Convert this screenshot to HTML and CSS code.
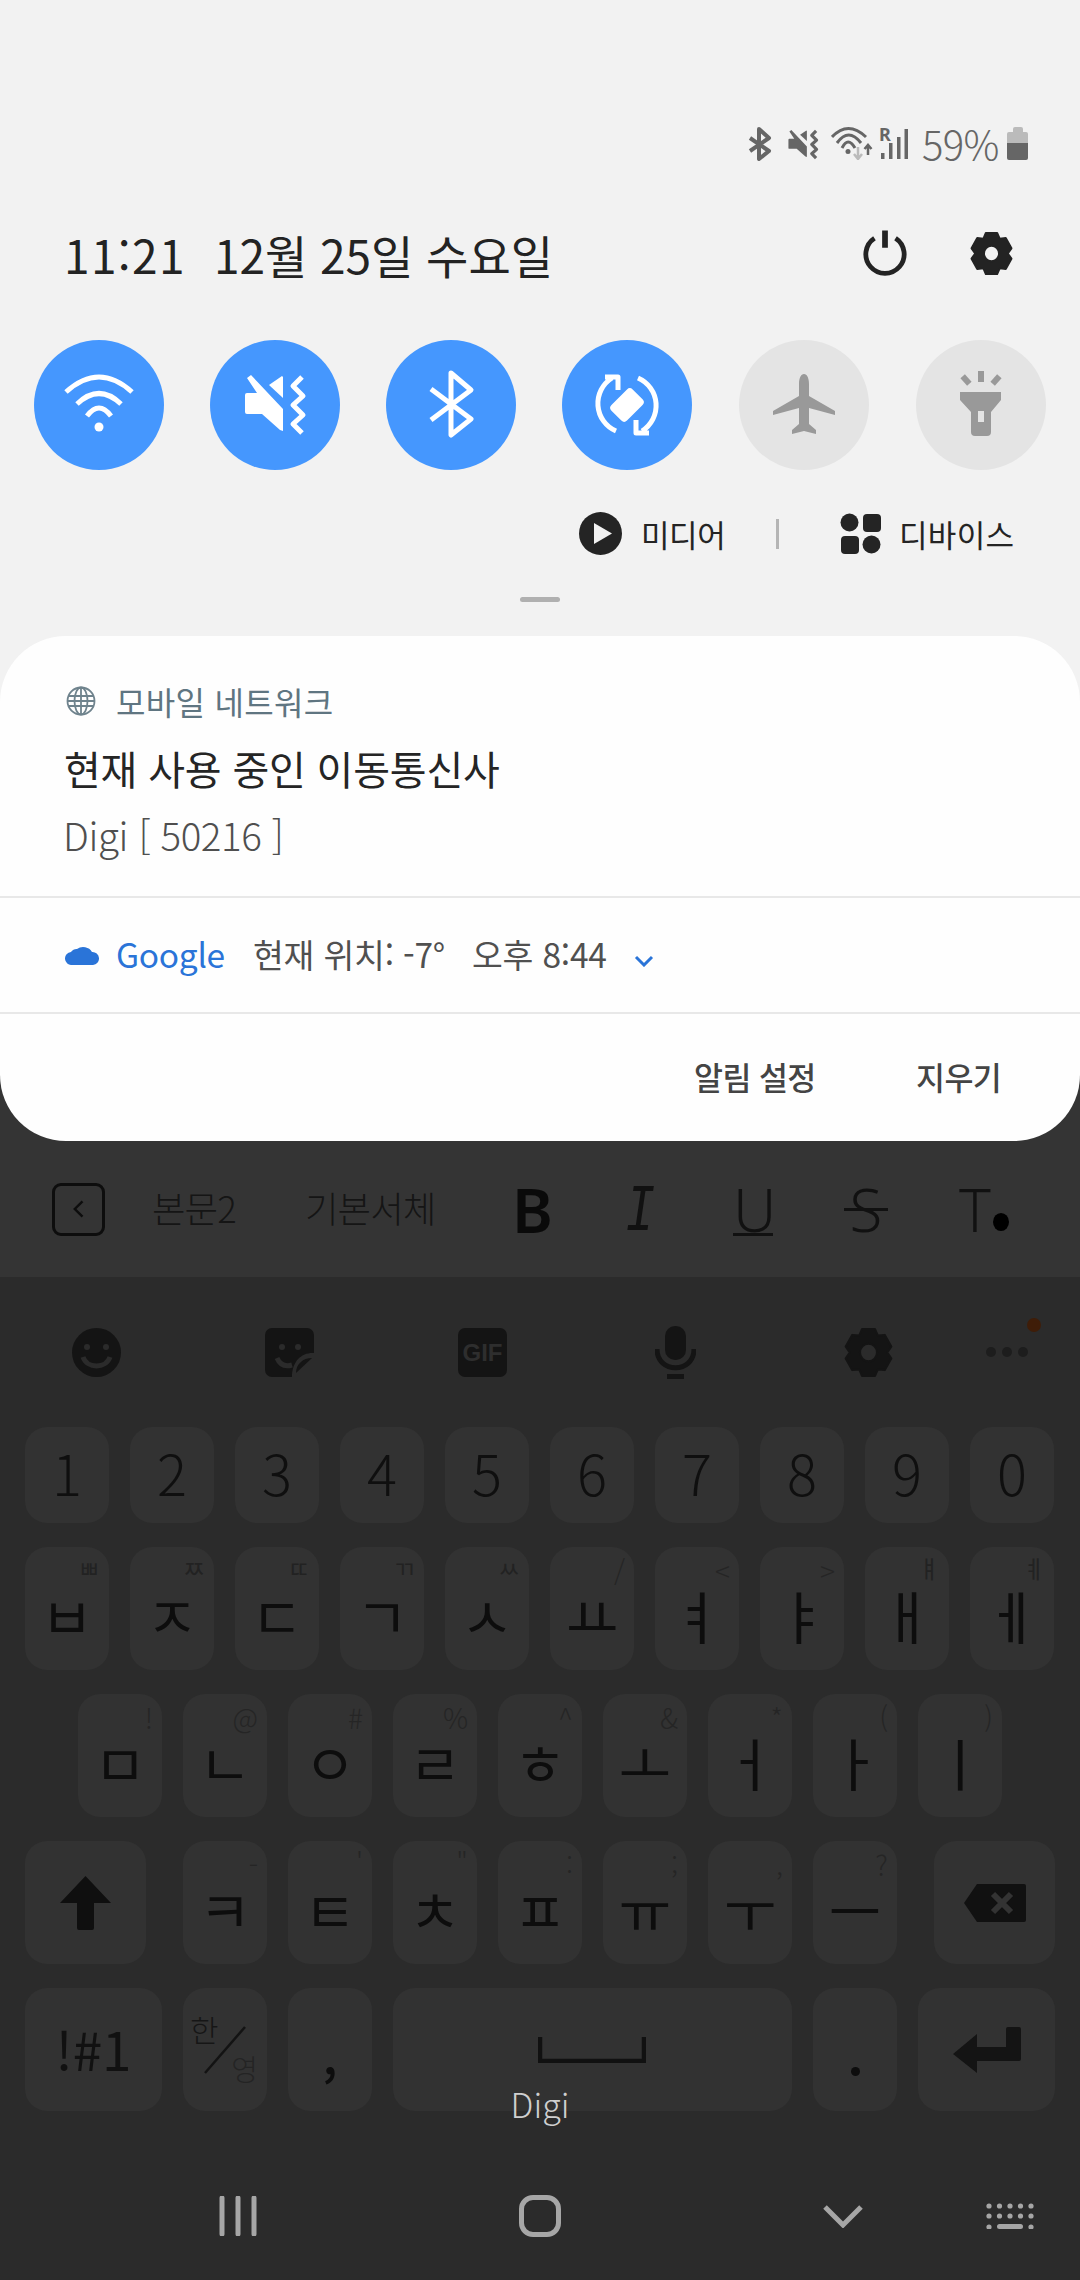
FILE: index.html
```html
<!DOCTYPE html>
<html lang="ko">
<head>
<meta charset="utf-8">
<title>빠른 설정</title>
<link rel="stylesheet" href="styles.css">
</head>
<body>
<svg class="defs" width="0" height="0" aria-hidden="true">
  <symbol id="gear" viewBox="1 1 46 46" preserveAspectRatio="none">
    <path fill-rule="evenodd" stroke="currentColor" stroke-width="2" stroke-linejoin="round" fill="currentColor" d="M17.9 2.9 30.1 2.9 32.8 8.8 39.3 8.2 45.4 18.7 41.5 24 45.4 29.3 39.3 39.8 32.8 39.2 30.1 45.1 17.9 45.1 15.3 39.2 8.7 39.8 2.6 29.3 6.5 24 2.6 18.7 8.7 8.2 15.3 8.8ZM24 16A8 8 0 1 0 24 32 8 8 0 1 0 24 16Z"/>
  </symbol>
  <symbol id="mute" viewBox="30 32 68 64">
    <path fill="currentColor" stroke="none" d="M37 38 41 35 73 69V91L70 90 52 74H37Q35 74 35 72V55Q35 53 37 53H47Z"/>
    <path fill="currentColor" stroke="none" d="M59 45 72 36 73 37V58Z"/>
    <path fill="none" stroke="currentColor" stroke-linejoin="round" d="M92 37 83 46 93 56 83 65 93 75 83 84 92 93"/>
  </symbol>
</svg>

<div class="phone">
  <section class="panel">
    <div class="status">
      <svg class="st-bt" viewBox="0 0 24 34"><path d="M2 11 21 24 11 32V2L21 11 2 24"/></svg>
      <svg class="st-mute"><use href="#mute"/></svg>
      <svg class="st-wifi" viewBox="0 0 42 33">
        <path d="M1 10Q17-7 35 10M6 16Q17.5 0 30 16M11 21Q17 9 24 21"/>
        <circle cx="17" cy="24.500" r="2.500"/>
        <path class="faint" d="M27 20V31M23 27 27 32 31 27"/>
        <path class="thin" d="M37 28V19M33.500 22 37 18 40.500 22"/>
      </svg>
      <svg class="st-signal" viewBox="0 0 30 33">
        <text x="1" y="14" class="roam">R</text>
        <rect x="3" y="26" width="3.500" height="6"/>
        <rect x="11" y="16" width="3.500" height="16"/>
        <rect x="19" y="10" width="3.500" height="22"/>
        <rect x="26.500" y="2" width="3.500" height="30"/>
      </svg>
      <span class="st-level">59%</span>
      <span class="battery"><i class="cap"></i><i class="empty"></i><i class="charge"></i></span>
    </div>

    <div class="clock-row">
      <span class="time">11:21</span>
      <span class="date">12월 25일 수요일</span>
      <svg class="power" viewBox="0 0 48 48"><path d="M13 8A20 20 0 1 0 35 8"/><path class="bar" d="M24 0V18"/></svg>
      <svg class="settings"><use href="#gear"/></svg>
    </div>

    <div class="tiles">
      <span class="tile on">
        <svg viewBox="0 0 130 130"><path d="M32 52Q65 22 98 52M43 64Q65 43 87 64M53 76Q65 60 77 76"/><circle class="solid" cx="65" cy="87" r="4.500"/></svg>
      </span>
      <span class="tile on">
        <svg class="tile-mute" viewBox="0 0 130 130"><use href="#mute" x="30" y="32" width="68" height="64"/></svg>
      </span>
      <span class="tile on">
        <svg viewBox="0 0 130 130"><path d="M45 49 85 79 65 95V33L85 50 45 80"/></svg>
      </span>
      <span class="tile on">
        <svg viewBox="0 0 130 130">
          <path d="M54 91A30 30 0 0 1 50 38M76 38A30 30 0 0 1 80 91M43 37H56V50M74 80V93H87"/>
          <rect class="solid" x="50" y="54" width="30" height="22" rx="4" transform="rotate(-45 65 65)"/>
        </svg>
      </span>
      <span class="tile off">
        <svg viewBox="0 0 130 130"><path class="solid" d="M65 34C68 34 70 38 70 44V56L96 71V75L70 68V84L77 90V94L65 91 53 94V90L60 84V68L34 75V71L60 56V44C60 38 62 34 65 34Z"/></svg>
      </span>
      <span class="tile off">
        <svg viewBox="0 0 130 130">
          <path class="solid" fill-rule="evenodd" d="M44 52H85V60L75 72V92Q75 96 71 96H59Q55 96 55 92V72L44 60ZM62 71V82H68V71Z"/>
          <rect class="solid" x="62" y="31" width="6" height="11"/>
          <rect class="solid" x="47" y="35" width="6" height="10" transform="rotate(-42 50 40)"/>
          <rect class="solid" x="77" y="35" width="6" height="10" transform="rotate(42 80 40)"/>
        </svg>
      </span>
    </div>

    <div class="media-row">
      <svg class="ic-play" viewBox="0 0 43 43"><circle cx="21.500" cy="21.500" r="21.500"/><path d="M15 11 33 21.500 15 32Z"/></svg>
      <span class="media-label">미디어</span>
      <i class="vr"></i>
      <svg class="ic-devices" viewBox="0 0 41 41"><circle cx="9.500" cy="9.500" r="9"/><rect x="23" y="1" width="18" height="18" rx="4"/><rect x="1" y="23" width="18" height="18" rx="4"/><circle cx="31.500" cy="31.500" r="9"/></svg>
      <span class="media-label device-label">디바이스</span>
    </div>
    <i class="handle"></i>
  </section>

  <div class="card-back">
    <section class="card">
      <div class="notice">
        <div class="app-line">
          <svg class="globe" viewBox="0 0 30 30"><circle cx="15" cy="15" r="13.500"/><ellipse cx="15" cy="15" rx="6.500" ry="13.500"/><path d="M15 1.500V28.500M2 10H28M1.500 15H28.500M2 20H28"/></svg>
          <span class="app-name">모바일 네트워크</span>
        </div>
        <div class="notice-title">현재 사용 중인 이동통신사</div>
        <div class="notice-body">Digi [ 50216 ]</div>
      </div>
      <div class="weather">
        <svg class="cloud" viewBox="0 0 34 23"><path d="M7 23A6.500 6.500 0 0 1 6 10 7 7 0 0 1 12 7 10 9 0 0 1 27 10 6.500 6.500 0 0 1 28 23Z"/></svg>
        <span class="w-app">Google</span>
        <span class="w-text">현재 위치: -7°</span>
        <span class="w-text w-time">오후 8:44</span>
        <svg class="chev" viewBox="0 0 20 12"><path d="M2 2 10 10 18 2"/></svg>
      </div>
      <div class="actions">
        <span class="action">알림 설정</span>
        <span class="action action-clear">지우기</span>
      </div>
    </section>
  </div>

  <section class="toolbar">
    <span class="tb-back"><svg viewBox="0 0 20 28"><path d="M15 3 4 14 15 25"/></svg></span>
    <span class="tb-style">본문2</span>
    <span class="tb-style tb-font">기본서체</span>
    <span class="tb-b">B</span>
    <span class="tb-i">I</span>
    <span class="tb-u">U</span>
    <span class="tb-s">S</span>
    <span class="tb-t">T<i class="tb-dot"></i></span>
  </section>

  <section class="keyboard">
    <div class="kb-tools">
      <svg class="ki ki-smile" viewBox="0 0 49 49"><circle class="fg" cx="24.500" cy="24.500" r="24.500"/><circle class="hole" cx="15" cy="19" r="3"/><circle class="hole" cx="34" cy="19" r="3"/><path class="line" d="M11 29C15 41 34 41 38 29"/></svg>
      <svg class="ki ki-sticker" viewBox="0 0 49 49"><path class="fg" d="M7 0H42A7 7 0 0 1 49 7V25C38 24 27 32 27 49H7A7 7 0 0 1 0 42V7A7 7 0 0 1 7 0Z"/><path class="fg" d="M47 30 31 45C31 36 38 30 47 30Z"/><circle class="hole" cx="17" cy="19" r="3"/><circle class="hole" cx="33" cy="19" r="3"/><path class="line" d="M12 30C15 37 20 39 27 37"/></svg>
      <span class="ki ki-gif">GIF</span>
      <svg class="ki ki-mic" viewBox="0 0 41 53"><rect class="fg" x="10" y="0" width="21" height="34" rx="10"/><path class="line-dark" d="M2 23C2 48 39 48 39 23"/><rect class="fg" x="12" y="48" width="17" height="5"/></svg>
      <svg class="ki ki-gear"><use href="#gear"/></svg>
      <span class="ki-more"><i></i><i></i><i></i><b class="new-dot"></b></span>
    </div>

    <div class="row row-num">
      <span class="key num">1</span><span class="key num">2</span><span class="key num">3</span><span class="key num">4</span><span class="key num">5</span><span class="key num">6</span><span class="key num">7</span><span class="key num">8</span><span class="key num">9</span><span class="key num">0</span>
    </div>
    <div class="row">
      <span class="key"><em>ㅃ</em>ㅂ</span><span class="key"><em>ㅉ</em>ㅈ</span><span class="key"><em>ㄸ</em>ㄷ</span><span class="key"><em>ㄲ</em>ㄱ</span><span class="key"><em>ㅆ</em>ㅅ</span><span class="key"><em class="sym">/</em>ㅛ</span><span class="key"><em class="sym">&lt;</em>ㅕ</span><span class="key"><em class="sym">&gt;</em>ㅑ</span><span class="key"><em>ㅒ</em>ㅐ</span><span class="key"><em>ㅖ</em>ㅔ</span>
    </div>
    <div class="row row-home">
      <span class="key"><em class="sym">!</em>ㅁ</span><span class="key"><em class="sym">@</em>ㄴ</span><span class="key"><em class="sym">#</em>ㅇ</span><span class="key"><em class="sym">%</em>ㄹ</span><span class="key"><em class="sym">^</em>ㅎ</span><span class="key"><em class="sym">&amp;</em>ㅗ</span><span class="key"><em class="sym">*</em>ㅓ</span><span class="key"><em class="sym">(</em>ㅏ</span><span class="key"><em class="sym">)</em>ㅣ</span>
    </div>
    <div class="row row-shift">
      <span class="key key-side"><svg class="k-shift" viewBox="0 0 51 54"><path d="M25.500 0 51 27H34V52Q34 54 32 54H19Q17 54 17 52V27H0Z"/></svg></span>
      <span class="key"><em class="sym">-</em>ㅋ</span><span class="key"><em class="sym">'</em>ㅌ</span><span class="key"><em class="sym">"</em>ㅊ</span><span class="key"><em class="sym">:</em>ㅍ</span><span class="key"><em class="sym">;</em>ㅠ</span><span class="key"><em class="sym">,</em>ㅜ</span><span class="key"><em class="sym">?</em>ㅡ</span>
      <span class="key key-side key-del"><svg class="k-del" viewBox="0 0 62 38"><path class="del-body" d="M13 0H60Q62 0 62 2V36Q62 38 60 38H13L0 19Z"/><path class="del-x" d="M29 10 47 28M47 10 29 28"/></svg></span>
    </div>
    <div class="row row-bottom">
      <span class="key key-sym">!#1</span>
      <span class="key key-lang"><span class="lang-ko">한</span><svg class="lang-slash" viewBox="0 0 42 48"><path d="M1 47 41 1"/></svg><span class="lang-en">영</span></span>
      <span class="key key-comma">,</span>
      <span class="key key-space"><svg class="k-space" viewBox="0 0 108 26"><path d="M2 0V24H106V0"/></svg></span>
      <span class="key key-dot"><i class="dot"></i></span>
      <span class="key key-enter"><svg class="k-enter" viewBox="0 0 68 46"><path d="M53 2Q53 0 55 0H66Q68 0 68 2V32Q68 34 66 34H24V46L0 27 24 7V20H53Z"/></svg></span>
    </div>
  </section>

  <nav class="nav">
    <svg class="nv-recent" viewBox="0 0 38 40"><path d="M3 2V38M19 2V38M35 2V38"/></svg>
    <span class="nv-home"></span>
    <svg class="nv-back" viewBox="0 0 40 24"><path d="M2 3 20 21 38 3"/></svg>
    <svg class="nv-kb" viewBox="0 0 48 26">
      <g><circle cx="3" cy="3" r="2.600"/><circle cx="13.500" cy="3" r="2.600"/><circle cx="24" cy="3" r="2.600"/><circle cx="34.500" cy="3" r="2.600"/><circle cx="45" cy="3" r="2.600"/><circle cx="3" cy="13" r="2.600"/><circle cx="13.500" cy="13" r="2.600"/><circle cx="24" cy="13" r="2.600"/><circle cx="34.500" cy="13" r="2.600"/><circle cx="45" cy="13" r="2.600"/><circle cx="3" cy="24" r="2.600"/><circle cx="45" cy="24" r="2.600"/><rect x="11" y="21" width="26" height="5" rx="2.500"/></g>
    </svg>
  </nav>

  <span class="carrier">Digi</span>
</div>
</body>
</html>
```

FILE: styles.css
```css
* { box-sizing: border-box; }

html, body { margin: 0; padding: 0; background: #2b2b2b; }

.defs { position: absolute; }

.phone {
  position: relative;
  width: 1080px;
  height: 2280px;
  overflow: hidden;
  display: flex;
  flex-direction: column;
  font-family: "Noto Sans CJK KR", "Noto Sans", sans-serif;
  background: #2b2b2b;
}

svg { display: block; flex: none; }

/* Quick panel */
.panel {
  height: 636px;
  background: #f2f2f2;
  padding-top: 127px;
  display: flex;
  flex-direction: column;
}

.status {
  height: 34px;
  display: flex;
  align-items: flex-start;
  padding-left: 748px;
  color: #666;
}
.status svg path { fill: none; stroke: #666; stroke-width: 3; }
.st-bt { width: 24px; height: 34px; }
.status .st-bt path { stroke-width: 4; stroke-linejoin: round; }
.st-mute { width: 33px; height: 34px; margin-left: 14px; stroke: #666; stroke-width: 6.500; color: #666; }
.st-wifi { width: 42px; height: 33px; margin-left: 12px; fill: #666; }
.status .st-wifi .faint { stroke: #bbb; stroke-width: 2.500; }
.status .st-wifi .thin { stroke-width: 2.500; }
.st-signal { width: 30px; height: 33px; margin-left: 5px; fill: #666; overflow: visible; }
.roam { font: 700 18px "Noto Sans", sans-serif; }
.st-level {
  margin-left: 14px;
  width: 78px;
  font-size: 40px;
  font-weight: 300;
  line-height: 34px;
  color: #666;
  letter-spacing: -0.6px;
  white-space: nowrap;
  margin-top: -1px;
}
.battery { margin-left: 7px; width: 21px; height: 33px; display: flex; flex-direction: column; align-items: center; }
.battery i { display: block; width: 100%; }
.battery .cap { width: 10px; height: 5px; background: #bbb; border-radius: 2px 2px 0 0; }
.battery .empty { height: 11px; background: #bbb; border-radius: 2px 2px 0 0; }
.battery .charge { height: 17px; background: #666; border-radius: 0 0 2px 2px; }

.clock-row {
  height: 47px;
  margin-top: 69px;
  padding-left: 64px;
  display: flex;
  align-items: center;
  color: #232323;
  font-size: 46px;
  font-weight: 400;
  white-space: nowrap;
}
.time { width: 121px; letter-spacing: 1.400px; }
.date { margin-left: 29px; width: 648px; letter-spacing: -0.050px; }
.power { width: 46px; height: 47px; }
.power path { fill: none; stroke: #232323; stroke-width: 5; }
.power .bar { stroke-width: 6; }
.settings { width: 43px; height: 45px; margin-left: 62px; color: #232323; }

.tiles {
  margin-top: 63px;
  padding: 0 34px;
  display: flex;
  gap: 46px;
}
.tile { width: 130px; height: 130px; border-radius: 50%; display: block; }
.tile.off { margin-left: 1px; }
.tile.on { background: #4597fe; }
.tile.off { background: #e4e4e4; }
.tile svg { width: 130px; height: 130px; }
.tile svg path { fill: none; stroke: #fff; stroke-width: 5; stroke-linejoin: round; }
.tile.on svg .solid { fill: #fff; stroke: none; }
.tile.off svg .solid { fill: #999; stroke: none; }
.tile-mute { color: #fff; stroke: #fff; stroke-width: 5; }

.media-row {
  margin-top: 42px;
  height: 43px;
  padding-left: 579px;
  display: flex;
  align-items: center;
  color: #242424;
  white-space: nowrap;
}
.ic-play { width: 43px; height: 43px; }
.ic-play circle { fill: #242424; }
.ic-play path { fill: #f2f2f2; }
.media-label { font-size: 31px; margin-left: 19px; line-height: 43px; letter-spacing: -0.400px; width: 83px; }
.vr { display: block; width: 3px; height: 30px; margin-left: 52px; background: #b5b5b5; }
.ic-devices { width: 41px; height: 41px; margin-left: 61px; fill: #242424; }
.device-label { width: 116px; margin-left: 18px; letter-spacing: 0.300px; }
.handle { display: block; width: 40px; height: 5px; margin: 42px auto 0; background: #b0b0b0; border-radius: 3px; }

/* Notification card; its corners sit on two different backgrounds */
.card-back { background: linear-gradient(#f2f2f2 50%, #343434 50%); }
.card {
  height: 505px;
  background: #fefefe;
  border-radius: 66px;
  display: flex;
  flex-direction: column;
}
.notice { height: 262px; padding: 48px 64px 0; border-bottom: 2px solid #e8e8e8; }
.app-line { display: flex; align-items: center; height: 34px; }
.globe { width: 30px; height: 30px; margin-left: 2px; }
.globe circle, .globe ellipse, .globe path { fill: none; stroke: #6f838d; stroke-width: 1.800; }
.app-name { margin-left: 20px; font-size: 32px; line-height: 34px; color: #5f7581; letter-spacing: 0.300px; white-space: nowrap; }
.notice-title { margin-top: 26px; font-size: 40px; line-height: 48px; color: #252525; letter-spacing: -0.200px; white-space: nowrap; }
.notice-body { margin-top: 17px; font-size: 38.500px; line-height: 50px; font-weight: 300; color: #4f4f4f; letter-spacing: -0.400px; white-space: nowrap; margin-left: -1px; }

.weather { height: 116px; padding: 0 0 0 65px; display: flex; align-items: center; border-bottom: 2px solid #e8e8e8; white-space: nowrap; }
.cloud { width: 34px; height: 23px; fill: #2a74d8; margin-top: -4px; }
.w-app { margin-left: 17px; font-size: 33.500px; color: #2a74d8; letter-spacing: -0.300px; font-weight: 400; width: 109px; margin-top: -3px; }
.w-text { margin-left: 28px; font-size: 33.500px; color: #505050; letter-spacing: -0.200px; width: 192px; margin-top: -3px; }
.w-time { margin-left: 27px; width: 134px; }
.chev { width: 20px; height: 12px; margin: 12px 0 0 28px; }
.chev path { fill: none; stroke: #2a74d8; stroke-width: 3; }

.actions { flex: 1; display: flex; align-items: center; padding: 0 0 4px 694px; white-space: nowrap; }
.action { font-size: 31.500px; font-weight: 500; color: #444; width: 122px; letter-spacing: -0.600px; }
.action-clear { margin-left: 100px; width: 90px; }

/* Text-format bar */
.toolbar {
  height: 136px;
  background: #343434;
  padding-left: 52px;
  display: flex;
  align-items: center;
  color: #111;
  white-space: nowrap;
}
.tb-back {
  display: flex;
  align-items: center;
  justify-content: center;
  width: 53px;
  height: 53px;
  border: 3.500px solid #0d0d0d;
  border-radius: 9px;
}
.tb-back svg { width: 14px; height: 20px; }
.tb-back path { fill: none; stroke: #0d0d0d; stroke-width: 3.500; }
.tb-style { margin-left: 47px; width: 83px; font-size: 36.500px; font-weight: 300; color: #151515; letter-spacing: -1px; margin-top: -3px; }
.tb-font { margin-left: 70px; width: 129px; }
.tb-b { margin-left: 78px; width: 37px; font: 600 62px/1 "Noto Sans", sans-serif; color: #0a0a0a; }
/* A smaller mono face stretched upright keeps the slab italic thin */
.tb-i { margin: 8px 0 0 76px; width: 26px; font: italic 400 50px/1 "Liberation Mono", monospace; color: #111; text-align: center; transform: scaleY(1.32); }
.tb-u { position: relative; margin-left: 82px; width: 40px; font: 300 60px/1 "Noto Sans", sans-serif; text-align: center; color: #111; }
.tb-u::after { content: ""; position: absolute; left: 0; right: 0; bottom: 3px; height: 3px; background: #111; }
.tb-s { position: relative; margin-left: 71px; width: 44px; font: 300 60px/1 "Noto Sans", sans-serif; text-align: center; color: #111; }
.tb-s::after { content: ""; position: absolute; left: 0; right: 0; top: 29px; height: 3px; background: #111; }
.tb-t { margin-left: 71px; width: 50px; display: flex; align-items: flex-end; font: 300 60px/1 "Noto Sans", sans-serif; color: #111; }
.tb-dot { display: block; width: 18px; height: 18px; margin: 0 0 8px 2px; border-radius: 50%; background: #000; }

/* Keyboard */
.keyboard { display: flex; flex-direction: column; }
.kb-tools { height: 150px; position: relative; display: flex; align-items: center; padding-left: 72px; }
.ki { display: block; width: 49px; height: 49px; }
.ki .fg { fill: #141414; }
.ki .hole { fill: #2b2b2b; }
.ki .line { fill: none; stroke: #2b2b2b; stroke-width: 5; }
.ki .line-dark { fill: none; stroke: #141414; stroke-width: 5; }
.ki-sticker { margin-left: 144px; }
.ki-gif {
  margin-left: 144px;
  border-radius: 7px;
  background: #141414;
  color: #2e2e2e;
  font: 700 24px/49px "Liberation Sans", sans-serif;
  text-align: center;
}
.ki-mic { width: 41px; height: 53px; margin-left: 148px; }
.ki-gear { width: 49px; height: 51px; margin-left: 148px; color: #141414; }
.ki-more { position: relative; margin-left: 93px; display: flex; gap: 6px; }
.ki-more i { display: block; width: 10px; height: 10px; border-radius: 50%; background: #1d1d1d; }
.new-dot { position: absolute; left: 41px; top: -29px; width: 14px; height: 14px; border-radius: 50%; background: #3f1d08; }

.row { display: flex; gap: 21px; padding-left: 25px; margin-bottom: 24px; }
.row-home { padding-left: 78px; }
.row-bottom { margin-bottom: 0; }
.key {
  position: relative;
  width: 84px;
  height: 123px;
  border-radius: 22px;
  background: #323232;
  color: #0d0d0d;
  display: flex;
  align-items: center;
  justify-content: center;
  font-size: 57px;
  font-weight: 400;
  line-height: 1;
  padding-top: 12px;
}
.key em {
  position: absolute;
  top: 8px;
  right: 9px;
  font-style: normal;
  font-size: 24px;
  font-weight: 400;
  color: #222;
  line-height: 1.100;
}
.key em.sym { font-size: 28px; font-weight: 300; color: #252525; }
.num { height: 96px; font-size: 56px; font-weight: 300; padding: 0 0 6px; color: #0f0f0f; }
.key-side { width: 121px; padding-top: 0; }
.row-shift .key-del { margin-left: 16px; }
.row-shift .key:first-child { margin-right: 16px; }
.k-shift { width: 51px; height: 54px; fill: #0f0f0f; }
.k-del { width: 62px; height: 38px; }
.del-body { fill: #111; }
.del-x { fill: none; stroke: #333; stroke-width: 6; }
.key-sym { width: 137px; font-size: 53px; font-weight: 400; padding: 0 0 3px; color: #111; }
.key-lang { display: block; padding: 0; }
.lang-ko { position: absolute; left: 7px; top: 25px; font-size: 31px; font-weight: 300; color: #161616; }
.lang-en { position: absolute; right: 9px; top: 66px; font-size: 29px; font-weight: 300; color: #242424; }
.lang-slash { position: absolute; left: 21px; top: 38px; width: 42px; height: 48px; }
.lang-slash path { fill: none; stroke: #131313; stroke-width: 2.500; }
.key-comma { font-size: 50px; font-weight: 500; padding-top: 6px; }
.key-space { width: 399px; padding: 0; }
.k-space { width: 108px; height: 26px; margin-left: -1px; }
.k-space path { fill: none; stroke: #111; stroke-width: 4.500; }
.key-dot { align-items: flex-start; padding: 79px 0 0; }
.dot { display: block; width: 9px; height: 9px; border-radius: 50%; background: #0d0d0d; }
.key-enter { width: 137px; padding: 0 0 0 1px; }
.k-enter { width: 68px; height: 46px; fill: #141414; }

/* System navigation */
.nav { height: 169px; display: flex; align-items: center; padding: 0 0 0 219px; }
.nv-recent { width: 38px; height: 40px; margin-top: 41px; }
.nv-recent path { fill: none; stroke: #a6a6a6; stroke-width: 5; stroke-linecap: round; }
.nv-home { display: block; width: 42px; height: 42px; margin: 41px 0 0 262px; border: 5px solid #a6a6a6; border-radius: 14px; }
.nv-back { width: 40px; height: 24px; margin: 41px 0 0 262px; }
.nv-back path { fill: none; stroke: #a6a6a6; stroke-width: 5; }
.nv-kb { width: 48px; height: 26px; margin: 41px 0 0 123px; fill: #a6a6a6; }

.carrier {
  position: absolute;
  left: 0;
  right: 0;
  top: 2081px;
  text-align: center;
  font-size: 34px;
  font-weight: 300;
  line-height: 46px;
  color: #cfcfcf;
}
```
